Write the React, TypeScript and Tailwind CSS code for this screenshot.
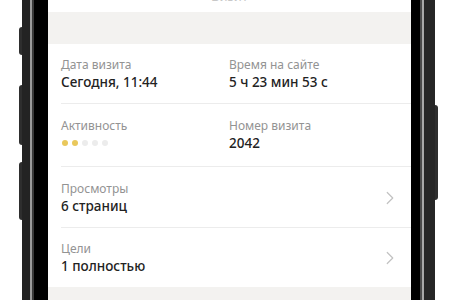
import { ChevronRight } from "lucide-react";

const font = { fontFamily: '"Noto Sans", "Open Sans", Arial, sans-serif' };

function Field({ label, children }: { label: string; children: React.ReactNode }) {
  return (
    <div className="flex flex-col">
      <span className="text-[12px] leading-[16px] text-[#939393]">{label}</span>
      {children}
    </div>
  );
}

function Value({ text }: { text: string }) {
  return <span className="text-[13.5px] leading-[18px] font-medium text-[#222]">{text}</span>;
}

function LinkRow({ label, value, last }: { label: string; value: string; last?: boolean }) {
  return (
    <div className={`flex items-center pr-[10px] ${last ? "pt-[13px] pb-[12px]" : "pt-[14px] pb-[12px] border-b border-[#ececec]"}`}>
      <div className="flex-1">
        <Field label={label}>
          <Value text={value} />
        </Field>
      </div>
      <ChevronRight className="w-[22px] h-[22px] text-[#c2c2c2]" strokeWidth={1.3} />
    </div>
  );
}

export default function App() {
  return (
    <div className="w-[450px] h-[300px] bg-white flex overflow-hidden" style={font}>
      {/* left buttons */}
      <div className="w-[22px] flex flex-col items-end pt-[27px]">
        <div className="w-[3px] h-[28px] bg-[#2e2e2e] rounded-l-sm" />
        <div className="w-[3px] h-[60px] bg-[#2e2e2e] rounded-l-sm mt-[30px]" />
        <div className="w-[3px] h-[58px] bg-[#2e2e2e] rounded-l-sm mt-[17px]" />
      </div>

      {/* phone body */}
      <div className="flex h-full">
        <div className="w-[8px] bg-[#232323]" />
        <div className="w-[2px] bg-[#9c9c9c]" />
        <div className="w-[2px] bg-[#3a3a3a]" />
        <div className="w-[14px] bg-black" />

        <div className="w-[363px] flex flex-col bg-white">
          <div className="h-[12px] overflow-hidden flex justify-center">
            <span className="text-[13px] leading-[16px] -mt-[12px] text-[#c8c8c8]">Визит</span>
          </div>
          <div className="h-[32px] bg-[#f3f2f0]" />

          <div className="pl-[13px]">
            <div className="grid grid-cols-[168px_1fr] pt-[13px] pb-[12px] border-b border-[#ececec]">
              <Field label="Дата визита">
                <Value text="Сегодня, 11:44" />
              </Field>
              <Field label="Время на сайте">
                <Value text="5 ч 23 мин 53 с" />
              </Field>
            </div>
            <div className="grid grid-cols-[168px_1fr] pt-[14px] pb-[14px] border-b border-[#ececec]">
              <Field label="Активность">
                <div className="h-[18px] flex items-center gap-[4px] pl-[1px]">
                  <span className="w-[6px] h-[6px] rounded-full bg-[#e9c85c]" />
                  <span className="w-[6px] h-[6px] rounded-full bg-[#e9c85c]" />
                  <span className="w-[6px] h-[6px] rounded-full bg-[#ececec]" />
                  <span className="w-[6px] h-[6px] rounded-full bg-[#ececec]" />
                  <span className="w-[6px] h-[6px] rounded-full bg-[#ececec]" />
                </div>
              </Field>
              <Field label="Номер визита">
                <Value text="2042" />
              </Field>
            </div>
            <LinkRow label="Просмотры" value="6 страниц" />
            <LinkRow label="Цели" value="1 полностью" last />
          </div>

          <div className="flex-1 bg-[#f3f2f0]" />
        </div>

        <div className="w-[9px] bg-black" />
        <div className="w-[2px] bg-[#4a4a4a]" />
        <div className="w-[2px] bg-[#a8a8a8]" />
        <div className="w-[11px] bg-[#262626]" />
      </div>

      {/* right button */}
      <div className="flex flex-col pt-[105px]">
        <div className="w-[3px] h-[95px] bg-[#2e2e2e] rounded-r-sm" />
      </div>
    </div>
  );
}
